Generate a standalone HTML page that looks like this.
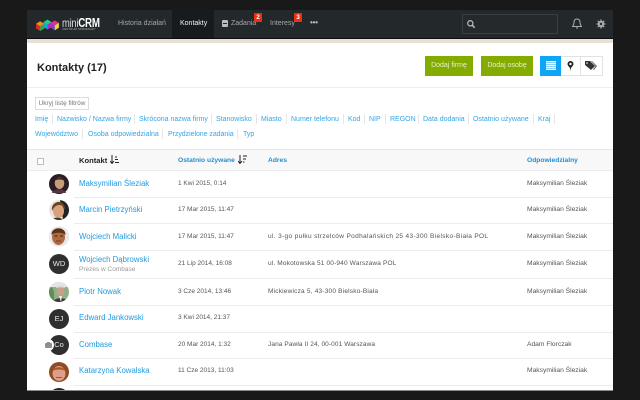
<!DOCTYPE html>
<html lang="pl">
<head>
<meta charset="utf-8">
<title>miniCRM Kontakty</title>
<style>
html,body{margin:0;padding:0;background:#191919;}
#p{position:relative;width:640px;height:400px;overflow:hidden;background:#191919;font-family:"Liberation Sans",sans-serif;font-size:7px;color:#555;filter:blur(.25px);}
#p div{position:absolute;white-space:nowrap;}
.n{color:#a5a8a9;font-size:7px;top:19px;line-height:10px;}
.f{color:#35a6e4;font-size:7px;line-height:10px;}
.s{width:1px;height:10px;background:#e6e6e6;}
.l{left:79px;color:#1f9be0;font-size:7.8px;line-height:10px;}
.d{left:178px;color:#555;font-size:6.5px;line-height:10px;}
.ad{left:268px;color:#555;font-size:6.5px;line-height:10px;}
.o{left:527px;color:#555;font-size:6.7px;line-height:10px;}
.r{left:74px;width:539px;height:1px;background:#ececec;}
.i{left:49px;width:20px;height:20px;border-radius:50%;background:#2f2f2f;color:#e8e8e8;font-size:7.5px;line-height:20px;text-align:center;}
.h{font-size:6.7px;font-weight:bold;color:#1f8fd0;line-height:10px;top:156px;}
</style>
</head>
<body>
<div id="p">
  <!-- header -->
  <div style="left:27px;top:10px;width:586px;height:28px;background:#23282b;"></div>
  <div style="left:172px;top:10px;width:42px;height:28px;background:#181b1d;"></div>
  <svg style="position:absolute;left:35px;top:18px" width="25" height="13" viewBox="0 0 30 16">
    <path d="M1 7l5-3 5 3v6l-5 3-5-3z" fill="#e8262c"/><path d="M6 4l5 3-5 3-5-3z" fill="#f58a1f"/><path d="M6 10l5-3v6l-5 3z" fill="#1fb04c"/>
    <path d="M10 5l5-3 5 3v6l-5 3-5-3z" fill="#16a9c9"/><path d="M15 2l5 3-5 3-5-3z" fill="#1bd07c"/><path d="M15 8l5-3v6l-5 3z" fill="#c023c9"/>
    <path d="M19 6l5-3 5 3v6l-5 3-5-3z" fill="#8a3fd1"/><path d="M24 3l5 3-5 3-5-3z" fill="#e92a8f"/><path d="M24 9l5-3v6l-5 3z" fill="#d8e021"/>
  </svg>
  <div style="left:62px;top:17px;font-size:12px;line-height:13px;color:#ddd;letter-spacing:-.3px;transform-origin:0 0;transform:scaleX(.78);">mini<b style="color:#fff;font-size:12.5px">CRM</b></div>
  <div style="left:62px;top:28px;font-size:3px;line-height:3px;color:#aaa;">CENTRUM SPRZEDAŻY</div>
  <div class="n" style="left:118px;">Historia działań</div>
  <div class="n" style="left:180px;color:#f2f2f2;">Kontakty</div>
  <div style="left:222px;top:20px;width:6px;height:7px;border-radius:1px;background:#b9bcbd;"></div>
  <div style="left:223px;top:23px;width:4px;height:1px;background:#23282b;"></div>
  <div class="n" style="left:231px;">Zadania</div>
  <div style="left:254px;top:13px;width:8px;height:9px;background:#ef2e0f;color:#fff;font-size:6.5px;line-height:9px;text-align:center;font-weight:bold;border-radius:1px;">2</div>
  <div class="n" style="left:270px;">Interesy</div>
  <div style="left:294px;top:13px;width:8px;height:9px;background:#ef2e0f;color:#fff;font-size:6.5px;line-height:9px;text-align:center;font-weight:bold;border-radius:1px;">3</div>
  <div style="left:310px;top:18px;color:#bbb;font-size:8px;line-height:10px;font-weight:bold;letter-spacing:-.2px;">•••</div>
  <div style="left:462px;top:14px;width:94px;height:18px;border:1px solid #3b3e40;background:#25292c;"></div>
  <svg style="position:absolute;left:466px;top:19px" width="10" height="10" viewBox="0 0 10 10"><circle cx="4.3" cy="4.3" r="2.6" fill="none" stroke="#b5b8b9" stroke-width="1.3"/><path d="M6.3 6.3l2.4 2.4" stroke="#b5b8b9" stroke-width="1.5"/></svg>
  <svg style="position:absolute;left:572px;top:18px" width="10" height="11" viewBox="0 0 10 11"><path d="M5 1c-2 0-3 1.500-3 3.500 0 2.500-1 3-1.500 4h9c-.5-1-1.500-1.500-1.500-4C8 2.500 7 1 5 1z" fill="none" stroke="#a9acad" stroke-width="1"/><path d="M4 9.500h2v1H4z" fill="#a9acad"/></svg>
  <svg style="position:absolute;left:596px;top:19px" width="10" height="10" viewBox="0 0 10 10"><circle cx="5" cy="5" r="2.200" fill="none" stroke="#a9acad" stroke-width="2"/><path d="M5 .5v2M5 7.500v2M.5 5h2M7.500 5h2M1.800 1.800l1.400 1.400M6.800 6.800l1.400 1.400M8.200 1.800L6.800 3.200M3.200 6.800L1.800 8.200" stroke="#a9acad" stroke-width="1.300"/></svg>

  <!-- content -->
  <div style="left:27px;top:38px;width:586px;height:1px;background:#0d0d0d;"></div>
  <div style="left:27px;top:39px;width:586px;height:351px;background:#fff;"></div>
  <div style="left:27px;top:39px;width:586px;height:4px;background:#e7e1d5;"></div>
  <div style="left:37px;top:61px;font-size:11px;line-height:14px;font-weight:bold;color:#222;">Kontakty (17)</div>

  <div style="left:425px;top:56px;width:48px;height:20px;background:#84ab00;color:#e8f2c8;font-size:7px;line-height:20px;text-align:center;">Dodaj firmę</div>
  <div style="left:481px;top:56px;width:52px;height:20px;background:#84ab00;color:#e8f2c8;font-size:7px;line-height:20px;text-align:center;">Dodaj osobę</div>
  <div style="left:540px;top:56px;width:61px;height:18px;border:1px solid #e2e2e2;background:#fff;"></div>
  <div style="left:540px;top:56px;width:21px;height:20px;background:#0ea5f5;"></div>
  <div style="left:580px;top:57px;width:1px;height:18px;background:#e2e2e2;"></div>
  <svg style="position:absolute;left:546px;top:61px" width="10" height="9" viewBox="0 0 10 9"><path d="M0 .7h10M0 2.600h10M0 4.500h10M0 6.400h10M0 8.300h10" stroke="#fff" stroke-width="1.400"/></svg>
  <svg style="position:absolute;left:567px;top:61px" width="7" height="10" viewBox="0 0 6 10"><path d="M3 0a3 3 0 0 1 3 3c0 1.500-1.500 2.500-2.500 4L3 10 2.500 7C1.500 5.500 0 4.500 0 3a3 3 0 0 1 3-3z" fill="#222"/><circle cx="3" cy="3" r="1.200" fill="#fff"/></svg>
  <svg style="position:absolute;left:585px;top:61px" width="12" height="10" viewBox="0 0 12 10"><path d="M0 0h5l5 5-4 4-6-5z" fill="#333"/><path d="M6 0h1l5 5-3 4-1-.5L10.500 5z" fill="#666"/><circle cx="2" cy="2" r=".8" fill="#fff"/></svg>

  <div style="left:27px;top:87px;width:586px;height:1px;background:#efefef;"></div>
  <div style="left:35px;top:97px;width:52px;height:11px;border:1px solid #ddd;color:#777;font-size:6.5px;line-height:11px;text-align:center;">Ukryj listę filtrów</div>

  <!-- filters -->
  <div class="f" style="left:35px;top:115px;">Imię</div><div class="s" style="left:52px;top:114px;"></div>
  <div class="f" style="left:57px;top:115px;">Nazwisko / Nazwa firmy</div><div class="s" style="left:134px;top:114px;"></div>
  <div class="f" style="left:139px;top:115px;">Skrócona nazwa firmy</div><div class="s" style="left:211px;top:114px;"></div>
  <div class="f" style="left:216px;top:115px;">Stanowisko</div><div class="s" style="left:256px;top:114px;"></div>
  <div class="f" style="left:261px;top:115px;">Miasto</div><div class="s" style="left:286px;top:114px;"></div>
  <div class="f" style="left:291px;top:115px;">Numer telefonu</div><div class="s" style="left:343px;top:114px;"></div>
  <div class="f" style="left:348px;top:115px;">Kod</div><div class="s" style="left:364px;top:114px;"></div>
  <div class="f" style="left:369px;top:115px;">NIP</div><div class="s" style="left:385px;top:114px;"></div>
  <div class="f" style="left:390px;top:115px;">REGON</div><div class="s" style="left:418px;top:114px;"></div>
  <div class="f" style="left:423px;top:115px;">Data dodania</div><div class="s" style="left:468px;top:114px;"></div>
  <div class="f" style="left:473px;top:115px;">Ostatnio używane</div><div class="s" style="left:533px;top:114px;"></div>
  <div class="f" style="left:538px;top:115px;">Kraj</div><div class="s" style="left:554px;top:114px;"></div>

  <div class="f" style="left:35px;top:130px;">Województwo</div><div class="s" style="left:82px;top:129px;"></div>
  <div class="f" style="left:88px;top:130px;">Osoba odpowiedzialna</div><div class="s" style="left:162px;top:129px;"></div>
  <div class="f" style="left:168px;top:130px;letter-spacing:-.05px;">Przydzielone zadania</div><div class="s" style="left:237px;top:129px;"></div>
  <div class="f" style="left:243px;top:130px;">Typ</div>

  <!-- table header -->
  <div style="left:27px;top:149px;width:586px;height:21px;background:#f8f8f8;border-top:1px solid #e8e8e8;box-sizing:border-box;"></div>
  <div style="left:27px;top:170px;width:586px;height:1px;background:#ececec;"></div>
  <div style="left:37px;top:158px;width:5px;height:5px;border:1px solid #bbb;border-radius:1px;background:#fff;"></div>
  <div style="left:79px;top:156px;font-size:7.6px;line-height:10px;font-weight:bold;color:#222;">Kontakt</div>
  <svg style="position:absolute;left:110px;top:155px" width="9" height="9" viewBox="0 0 9 9"><path d="M2 0v8M0 6l2 2.500L4 6" fill="none" stroke="#222" stroke-width="1"/><path d="M5 2h2M5 4.500h3M5 7.500h4" stroke="#222" stroke-width="1"/></svg>
  <div class="h" style="left:178px;">Ostatnio używane</div>
  <svg style="position:absolute;left:238px;top:155px" width="9" height="9" viewBox="0 0 9 9"><path d="M2 0v8M0 6l2 2.500L4 6" fill="none" stroke="#222" stroke-width="1"/><path d="M5 1h4M5 4h3M5 7h1.500" stroke="#222" stroke-width="1"/></svg>
  <div class="h" style="left:268px;">Adres</div>
  <div class="h" style="left:527px;">Odpowiedzialny</div>

  <!-- row separators -->
  <div class="r" style="top:197px;"></div>
  <div class="r" style="top:223px;"></div>
  <div class="r" style="top:250px;"></div>
  <div class="r" style="top:278px;"></div>
  <div class="r" style="top:305px;"></div>
  <div class="r" style="top:332px;"></div>
  <div class="r" style="top:358px;"></div>
  <div class="r" style="top:385px;"></div>

  <!-- avatars -->
  <svg style="position:absolute;left:49px;top:174px" width="20" height="20" viewBox="0 0 20 20"><circle cx="10" cy="10" r="10" fill="#2b1d22"/><ellipse cx="10.500" cy="9" rx="4.800" ry="6" fill="#c89b7b"/><path d="M5.500 7c0-5 10-5 10 0-2-2-8-2-10 0z" fill="#3a2a1e"/><path d="M3 19c1-5 13-5 14 0z" fill="#5a3248"/></svg>
  <svg style="position:absolute;left:49px;top:200px" width="20" height="20" viewBox="0 0 20 20"><defs><clipPath id="c1"><circle cx="10" cy="10" r="10"/></clipPath></defs><g clip-path="url(#c1)"><rect width="20" height="20" fill="#e9e4df"/><path d="M11 0h9v20h-6z" fill="#222"/><ellipse cx="9.500" cy="11" rx="5.500" ry="7" fill="#d9a27c"/><path d="M3 11C1 0 17-2 16 10c-2-4-3-5-6-5-3 0-5 2-7 6z" fill="#6b4620"/><path d="M2 20c1-3 11-3 12 0z" fill="#333"/></g></svg>
  <svg style="position:absolute;left:49px;top:226px" width="20" height="21" viewBox="0 0 20 21"><defs><clipPath id="c2"><circle cx="10" cy="10.500" r="10.300"/></clipPath></defs><g clip-path="url(#c2)"><rect width="20" height="21" fill="#e8eaea"/><ellipse cx="9.500" cy="11" rx="6.500" ry="8" fill="#b06a42"/><path d="M2.500 9C2 0 17 0 16.500 9c-2-3-12-3-14 0z" fill="#5b3414"/><path d="M5.500 10h3M11 10h3" stroke="#3a2010"/><path d="M7 15h5" stroke="#7a3a26"/></g></svg>
  <div class="i" style="top:254px;">WD</div>
  <svg style="position:absolute;left:49px;top:282px" width="20" height="20" viewBox="0 0 20 20"><defs><clipPath id="c3"><circle cx="10" cy="10" r="10"/></clipPath></defs><g clip-path="url(#c3)"><rect width="20" height="20" fill="#8fb08a"/><path d="M0 0h20v5H0z" fill="#e6e6e2"/><path d="M0 5c3 0 5 2 5 7v8H0z" fill="#5f8f55"/><ellipse cx="11.500" cy="9" rx="4" ry="5" fill="#c9a088"/><path d="M7 6c0-4 9-4 9 0-3-1-6-1-9 0z" fill="#ddd"/><path d="M4 20c1-5 14-5 15 0z" fill="#4a3636"/><path d="M10 14h3l-1 6z" fill="#eee"/></g></svg>
  <div class="i" style="top:309px;">EJ</div>
  <div class="i" style="top:335px;">Co</div>
  <div style="left:43px;top:339px;width:11px;height:12px;border-radius:50%;background:#fff;"></div>
  <div style="left:45px;top:343px;width:7px;height:5px;border-radius:1px;background:#8f8f8f;"></div>
  <div style="left:47px;top:342px;width:3px;height:1px;background:#8f8f8f;"></div>
  <svg style="position:absolute;left:49px;top:362px" width="20" height="20" viewBox="0 0 20 20"><defs><clipPath id="c4"><circle cx="10" cy="10" r="10"/></clipPath></defs><g clip-path="url(#c4)"><rect width="20" height="20" fill="#8f4a22"/><ellipse cx="10" cy="11.500" rx="6.500" ry="7.500" fill="#dd9f88"/><path d="M3.500 9c1-5 12-5 13 0-3-2-10-2-13 0z" fill="#a5562a"/><path d="M7 15.500h6" stroke="#a84a4a"/></g></svg>
  <svg style="position:absolute;left:49px;top:388px" width="20" height="2" viewBox="0 0 20 2"><circle cx="10" cy="10" r="10" fill="#2a2220"/></svg>
  <div style="left:27px;top:390px;width:586px;height:1px;background:#8a8a8a;"></div>

  <!-- rows -->
  <div class="l" style="top:179px;">Maksymilian Śleziak</div>
  <div class="d" style="top:179px;">1 Kwi 2015, 0:14</div>
  <div class="o" style="top:179px;">Maksymilian Śleziak</div>

  <div class="l" style="top:205px;">Marcin Pietrzyński</div>
  <div class="d" style="top:205px;">17 Mar 2015, 11:47</div>
  <div class="o" style="top:205px;">Maksymilian Śleziak</div>

  <div class="l" style="top:232px;">Wojciech Malicki</div>
  <div class="d" style="top:232px;">17 Mar 2015, 11:47</div>
  <div class="ad" style="top:232px;letter-spacing:.35px;">ul. 3-go pułku strzelców Podhalańskich 25 43-300 Bielsko-Biała POL</div>
  <div class="o" style="top:232px;">Maksymilian Śleziak</div>

  <div class="l" style="top:255px;">Wojciech Dąbrowski</div>
  <div style="left:79px;top:265px;font-size:6.5px;line-height:9px;color:#999;">Prezes w Combase</div>
  <div class="d" style="top:259px;">21 Lip 2014, 16:08</div>
  <div class="ad" style="top:259px;letter-spacing:.16px;">ul. Mokotowska 51 00-940 Warszawa POL</div>
  <div class="o" style="top:259px;">Maksymilian Śleziak</div>

  <div class="l" style="top:287px;">Piotr Nowak</div>
  <div class="d" style="top:287px;">3 Cze 2014, 13:46</div>
  <div class="ad" style="top:287px;letter-spacing:.2px;">Mickiewicza 5, 43-300 Bielsko-Biała</div>
  <div class="o" style="top:287px;">Maksymilian Śleziak</div>

  <div class="l" style="top:313px;">Edward Jankowski</div>
  <div class="d" style="top:313px;">3 Kwi 2014, 21:37</div>

  <div class="l" style="top:340px;">Combase</div>
  <div class="d" style="top:340px;">20 Mar 2014, 1:32</div>
  <div class="ad" style="top:340px;letter-spacing:.1px;">Jana Pawła II 24, 00-001 Warszawa</div>
  <div class="o" style="top:340px;">Adam Florczak</div>

  <div class="l" style="top:366px;">Katarzyna Kowalska</div>
  <div class="d" style="top:366px;">11 Cze 2013, 11:03</div>
  <div class="o" style="top:366px;">Maksymilian Śleziak</div>
</div>
</body>
</html>
